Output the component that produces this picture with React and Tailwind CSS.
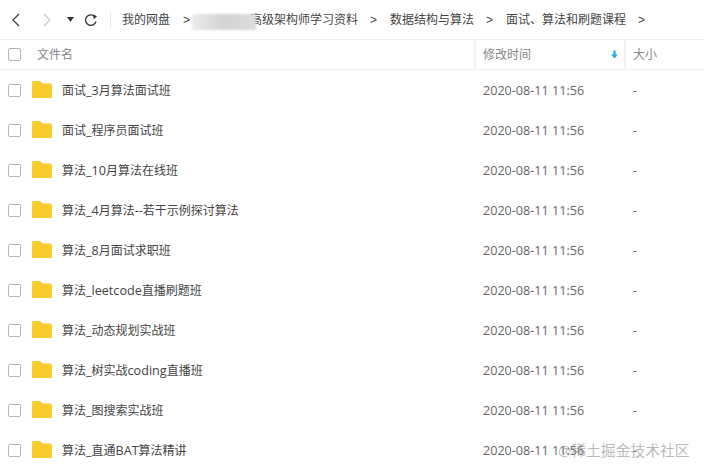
const rows = ["面试_3月算法面试班","面试_程序员面试班","算法_10月算法在线班","算法_4月算法--若干示例探讨算法","算法_8月面试求职班","算法_leetcode直播刷题班","算法_动态规划实战班","算法_树实战coding直播班","算法_图搜索实战班","算法_直通BAT算法精讲"];
function Check({row}){return <span className={"block w-[13px] h-[13px] border border-[#b5b5b5] rounded-[2px] bg-white shrink-0 relative " + (row ? "top-[1px]" : "")}/>;}
function Folder(){return (<svg width="20" height="17" viewBox="0 0 20 17" className="block shrink-0"><path d="M1.5 0H8L10.5 2.5H18.5Q20 2.5 20 4V15.5Q20 17 18.5 17H1.5Q0 17 0 15.5V1.5Q0 0 1.5 0Z" fill="#F9CB2C"/></svg>);}
function Sep(){return <span className="text-[#444] text-[12px] font-['Liberation_Sans']">&gt;</span>;}
function Name({text}){
 return <span className="ml-[10px] relative top-[1px]">{text.split(/([\x00-\x7f]+)/).filter(Boolean).map((s,i)=>/^[\x00-\x7f]/.test(s)?<span key={i} className="text-[12.6px]">{s}</span>:<span key={i}>{s}</span>)}</span>;
}
export default function App(){
return (
<div className="w-[704px] h-[473px] overflow-hidden bg-white text-[12px] text-[#444] font-['Open_Sans','Noto_Sans_CJK_SC',sans-serif] relative">
 <div className="h-10 flex items-center border-b border-[#f0f0f0] relative">
  <div className="flex items-center pl-[12px] w-[110px] shrink-0">
   <svg width="10" height="14" viewBox="0 0 10 14" fill="none" stroke="#444" strokeWidth="1.3"><path d="M7 1L1 7L7 13"/></svg>
   <svg width="10" height="14" viewBox="0 0 10 14" fill="none" stroke="#c4c4c4" strokeWidth="1.1" className="ml-[20px]"><path d="M2 1L8 7L2 13"/></svg>
   <svg width="7" height="5" viewBox="0 0 7 5" className="ml-[15px]"><path d="M0 0H7L3.5 5Z" fill="#333"/></svg>
   <svg width="14" height="14" viewBox="0 0 14 14" fill="none" stroke="#333" strokeWidth="1.3" className="ml-[10px]"><path d="M12 8.5A5.3 5.3 0 1 1 10.5 3.2"/><path d="M9.2 1.2L13 3.6L9.6 6.2Z" fill="#333" stroke="none"/></svg>
  </div>
  <span className="w-px h-4 bg-[#e4e4e4] shrink-0"/>
  <div className="flex items-center pl-[11px] whitespace-nowrap">
   <span>我的网盘</span>
   <span className="ml-[13px]"><Sep/></span>
   <span className="ml-[60px]">高级架构师学习资料</span>
   <span className="ml-[12px]"><Sep/></span>
   <span className="ml-[13px]">数据结构与算法</span>
   <span className="ml-[12px]"><Sep/></span>
   <span className="ml-[13px]">面试、算法和刷题课程</span>
   <span className="ml-[12px]"><Sep/></span>
  </div>
  <span className="absolute left-[192px] top-[14px] w-[64px] h-[16px] bg-gradient-to-r from-[#ececec] via-[#d4d4d4] to-[#dcdcdc] [filter:blur(1px)]"/>
 </div>
 <div className="h-[30px] flex items-center border-b border-[#f0f0f0] text-[#888]">
  <div className="flex-1 flex items-center pl-[8px]"><Check/><span className="ml-[16px]">文件名</span></div>
  <div className="w-[150px] h-full flex items-center justify-between pl-[7px] pr-[6px] border-l-2 border-[#f2f2f2]">
   <span>修改时间</span>
   <svg width="7" height="9" viewBox="0 0 8 9"><path d="M2.7 0H5.3V4.5H8L4 9L0 4.5H2.7Z" fill="#2DA5E8"/></svg>
  </div>
  <div className="w-[80px] h-full flex items-center pl-[7px] border-l-2 border-[#f2f2f2]"><span>大小</span></div>
 </div>
 {rows.map(r=>(
 <div key={r} className="h-10 flex items-center">
  <div className="flex-1 flex items-center pl-[8px]"><Check row/><span className="ml-[11px]"><Folder/></span><Name text={r}/></div>
  <div className="w-[151px] pl-[9px] text-[#666] text-[12.6px] relative top-[1px]">2020-08-11 11:56</div>
  <div className="w-[79px] pl-[8px] text-[#666] relative top-[1px]">-</div>
 </div>))}
 <div className="absolute left-[558px] top-[439px] text-[14.8px] text-[#9a9a9a]/70 whitespace-nowrap">@稀土掘金技术社区</div>
</div>);
}
